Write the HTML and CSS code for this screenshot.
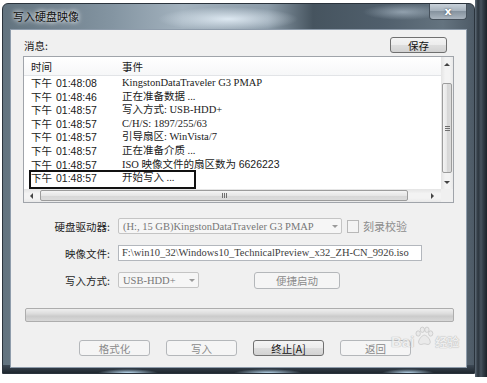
FILE: index.html
```html
<!DOCTYPE html>
<html lang="zh-CN">
<head>
    <meta charset="UTF-8">
    <title>写入硬盘映像</title>
    <link rel="stylesheet" href="styles.css">
</head>
<body>
    <div class="screen">
        <div class="window">
            <div class="titlebar">
                <span class="title">写入硬盘映像</span>
                <button class="close">x</button>
            </div>
            <div class="client">
                <div class="msg-head">
                    <span>消息:</span>
                    <button class="btn">保存</button>
                </div>

                <div class="listbox">
                    <div class="list-view">
                        <div class="list-header">
                            <span class="col-time">时间</span>
                            <span class="col-event">事件</span>
                        </div>
                        <div class="row"><span class="col-time">下午<span class="clock">01:48:08</span></span><span class="col-event">KingstonDataTraveler G3 PMAP</span></div>
                        <div class="row"><span class="col-time">下午<span class="clock">01:48:46</span></span><span class="col-event">正在准备数据 ...</span></div>
                        <div class="row"><span class="col-time">下午<span class="clock">01:48:57</span></span><span class="col-event">写入方式: USB-HDD+</span></div>
                        <div class="row"><span class="col-time">下午<span class="clock">01:48:57</span></span><span class="col-event">C/H/S: 1897/255/63</span></div>
                        <div class="row"><span class="col-time">下午<span class="clock">01:48:57</span></span><span class="col-event">引导扇区: WinVista/7</span></div>
                        <div class="row"><span class="col-time">下午<span class="clock">01:48:57</span></span><span class="col-event">正在准备介质 ...</span></div>
                        <div class="row"><span class="col-time">下午<span class="clock">01:48:57</span></span><span class="col-event">ISO 映像文件的扇区数为 <span class="num">6626223</span></span></div>
                        <div class="row"><span class="col-time">下午<span class="clock">01:48:57</span></span><span class="col-event">开始写入 ...</span></div>
                    </div>
                    <div class="vscroll">
                        <div class="sb-btn v-btn-up"><i class="arrow-up"></i></div>
                        <div class="sb-gap"></div>
                        <div class="thumb v-thumb"><i class="grip-h"></i></div>
                        <div class="sb-fill"></div>
                        <div class="sb-btn v-btn-down"><i class="arrow-down"></i></div>
                    </div>
                    <div class="hscroll">
                        <div class="sb-btn h-btn-left"><i class="arrow-left"></i></div>
                        <div class="thumb h-thumb"><i class="grip-v"></i></div>
                        <div class="sb-fill"></div>
                        <div class="sb-btn h-btn-right"><i class="arrow-right"></i></div>
                    </div>
                    <div class="corner"></div>
                    <div class="mark"></div>
                </div>

                <div class="form">
                    <div class="field">
                        <label>硬盘驱动器:</label>
                        <div class="combo drive">(H:, 15 GB)KingstonDataTraveler G3 PMAP<span class="drop"><i class="arrow-down light"></i></span></div>
                        <span class="checkbox"></span>
                        <span class="check-label">刻录校验</span>
                    </div>
                    <div class="field">
                        <label>映像文件:</label>
                        <div class="path">F:\win10_32\Windows10_TechnicalPreview_x32_ZH-CN_9926.iso</div>
                    </div>
                    <div class="field">
                        <label>写入方式:</label>
                        <div class="combo mode">USB-HDD+<span class="drop"><i class="arrow-down light"></i></span></div>
                        <button class="btn disabled quick">便捷启动</button>
                    </div>
                </div>

                <div class="progress"></div>

                <div class="actions">
                    <button class="btn disabled">格式化</button>
                    <button class="btn disabled">写入</button>
                    <button class="btn">终止[A]</button>
                    <button class="btn disabled">返回</button>
                </div>

                <div class="watermark">
                    <span class="wm-bai">Bai</span>
                    <svg class="paw" width="20" height="20" viewBox="0 0 24 24">
                        <ellipse cx="5" cy="9" rx="2.6" ry="3.2" />
                        <ellipse cx="10" cy="4.5" rx="2.6" ry="3.2" />
                        <ellipse cx="15.5" cy="4.5" rx="2.6" ry="3.2" />
                        <ellipse cx="20" cy="9" rx="2.6" ry="3.2" />
                        <path d="M12.5 11c-3 0-7 5-7 8.5 0 2.5 2.5 3 4 2.5 1.2-.4 2-.6 3-.6s1.8.2 3 .6c1.5.5 4 0 4-2.5 0-3.5-4-8.5-7-8.5z" />
                    </svg>
                    <span class="wm-jy">经验</span>
                </div>
            </div>
        </div>
        <div class="behind"></div>
    </div>
</body>
</html>
```

FILE: styles.css
```css
* {
    box-sizing: border-box;
}

body {
    margin: 0;
    background-color: #fff;
    font-family: "Noto Sans CJK SC", sans-serif;
    font-size: 10.5px;
    color: #1a1a1a;
}

.screen {
    display: flex;
    align-items: flex-start;
    width: 487px;
    height: 383px;
    overflow: hidden;
}

/* aero glass frame */
.window {
    display: flex;
    flex-direction: column;
    width: 473px;
    height: 371px;
    margin: 3px 0 0 2px;
    padding: 0 7px 5px 7px;
    border: 1px solid #2a333c;
    border-radius: 6px 6px 0 0;
    background:
        radial-gradient(ellipse 30px 4px at 125px 100%, rgba(200, 232, 255, 0.95), transparent),
        radial-gradient(ellipse 34px 4px at 265px 100%, rgba(200, 232, 255, 0.9), transparent),
        radial-gradient(ellipse 26px 4px at 405px 100%, rgba(200, 232, 255, 0.9), transparent),
        linear-gradient(to bottom, transparent 361px, #3d4955 361px, #1f272f),
        radial-gradient(ellipse 70px 12px at 225px 15px, rgba(225, 236, 245, 0.95), transparent),
        radial-gradient(ellipse 40px 8px at 400px 8px, rgba(170, 185, 198, 0.7), transparent),
        linear-gradient(90deg, #62737f 0, #8495a2 110px, #a3b2be 180px, #8b9ba8 265px, #46545f 310px, #505f6c 380px, #64737f 440px, #4c5965 473px);
}

.titlebar {
    display: flex;
    align-items: flex-start;
    height: 25px;
    flex-shrink: 0;
}

.title {
    margin: 4px 0 0 3px;
    font-size: 11px;
    color: #111;
    text-shadow: 0 0 4px #fff, 0 0 6px rgba(255, 255, 255, 0.8);
}

.close {
    margin-left: auto;
    width: 38px;
    height: 16px;
    padding: 0;
    border: 1px solid #46515c;
    border-top: none;
    border-radius: 0 0 4px 4px;
    background: linear-gradient(#c9d2da, #a3afba 50%, #86939f 50%, #aab5bf);
    color: #fff;
    font-family: "DejaVu Sans", sans-serif;
    font-size: 11px;
    font-weight: bold;
    line-height: 13px;
    text-shadow: 0 0 2px #3a4550;
}

.client {
    position: relative;
    display: flex;
    flex-direction: column;
    flex: 1;
    border: 1px solid #8e9cab;
    background-color: #f0f0f0;
}

.msg-head {
    display: flex;
    justify-content: space-between;
    align-items: center;
    height: 16px;
    margin: 7px 19px 0 13px;
}

/* buttons */
.btn {
    width: 71px;
    height: 16px;
    padding: 0;
    border: 1px solid #707070;
    border-radius: 3px;
    background: linear-gradient(#f4f4f4, #ececec 50%, #dedede 50%, #d2d2d2);
    font-family: "Noto Sans CJK SC", sans-serif;
    font-size: 10.5px;
    line-height: 13px;
    color: #111;
}

.msg-head .btn {
    width: 57px;
}

.btn.disabled {
    border-color: #b4b7ba;
    background: #f5f5f5;
    color: #8a8a8a;
}

/* message list */
.listbox {
    position: relative;
    display: grid;
    grid-template-columns: 1fr 12px;
    grid-template-rows: 1fr 13px;
    height: 147px;
    margin: 3px 12px 0 12px;
    border: 1px solid #a0a4aa;
    background-color: #fff;
}

.list-view {
    overflow: hidden;
}

.list-header {
    display: flex;
    align-items: center;
    height: 19px;
    border-bottom: 1px solid #e2e4e7;
    background: linear-gradient(#fff, #f6f7f8);
}

.row {
    display: flex;
    height: 13.6px;
    line-height: 13.6px;
    white-space: nowrap;
}

.col-time {
    width: 98px;
    padding-left: 7px;
    flex-shrink: 0;
}

.col-event {
    font-family: "Liberation Serif", "Noto Sans CJK SC", serif;
}

.list-header .col-event {
    font-family: "Noto Sans CJK SC", sans-serif;
}

.clock {
    margin-left: 4px;
    font-family: "Liberation Sans", sans-serif;
}

.num {
    font-family: "Liberation Sans", sans-serif;
}

.mark {
    position: absolute;
    left: 5px;
    top: 113px;
    width: 167px;
    height: 19px;
    border: 2px solid #111;
}

/* scrollbars */
.vscroll {
    display: flex;
    flex-direction: column;
    background: linear-gradient(90deg, #e4e4e4, #f3f3f3 35%, #f3f3f3 70%, #e9e9e9);
}

.hscroll {
    display: flex;
    background: linear-gradient(#e4e4e4, #f3f3f3 35%, #f3f3f3 70%, #e9e9e9);
}

.corner {
    background-color: #f0f0f0;
}

.sb-btn {
    display: flex;
    align-items: center;
    justify-content: center;
    flex-shrink: 0;
}

.v-btn-up {
    height: 15px;
}

.v-btn-down {
    height: 13px;
}

.h-btn-left {
    width: 15px;
}

.h-btn-right {
    width: 17px;
}

.sb-gap {
    height: 11px;
}

.sb-fill {
    flex: 1;
}

.thumb {
    display: flex;
    align-items: center;
    justify-content: center;
    border: 1px solid #9c9c9c;
    border-radius: 2px;
}

.v-thumb {
    height: 90px;
    margin: 0 1px;
    background: linear-gradient(90deg, #f4f4f4, #e6e6e6 50%, #d6d6d6 50%, #dcdcdc);
}

.h-thumb {
    width: 368px;
    margin: 1px 0 1px 1px;
    background: linear-gradient(#f4f4f4, #e6e6e6 50%, #d6d6d6 50%, #dcdcdc);
}

.grip-h {
    width: 5px;
    height: 5px;
    background: repeating-linear-gradient(#6f6f6f 0 1px, transparent 1px 2px);
}

.grip-v {
    width: 5px;
    height: 5px;
    background: repeating-linear-gradient(90deg, #6f6f6f 0 1px, transparent 1px 2px);
}

.arrow-up,
.arrow-down {
    width: 0;
    height: 0;
    border-left: 3px solid transparent;
    border-right: 3px solid transparent;
}

.arrow-up {
    border-bottom: 3px solid #444;
}

.arrow-down {
    border-top: 3px solid #444;
}

.arrow-down.light {
    border-top-color: #9a9a9a;
}

.arrow-left,
.arrow-right {
    width: 0;
    height: 0;
    border-top: 3px solid transparent;
    border-bottom: 3px solid transparent;
}

.arrow-left {
    border-right: 3px solid #444;
}

.arrow-right {
    border-left: 3px solid #444;
}

/* form */
.form {
    display: flex;
    flex-direction: column;
    gap: 11px;
    margin-top: 15px;
}

.field {
    display: flex;
    align-items: center;
    height: 16px;
}

.field label {
    width: 99px;
    margin-right: 8px;
    text-align: right;
    color: #1e1e1e;
}

.combo {
    display: flex;
    align-items: center;
    height: 16px;
    padding-left: 4px;
    border: 1px solid #c4c4c4;
    border-radius: 2px;
    background-color: #f6f6f6;
    font-family: "Liberation Serif", serif;
    color: #777;
    white-space: nowrap;
    overflow: hidden;
}

.combo.drive {
    width: 224px;
}

.combo.mode {
    width: 81px;
}

.drop {
    display: flex;
    align-items: center;
    justify-content: center;
    width: 13px;
    height: 14px;
    margin-left: auto;
}

.checkbox {
    width: 12px;
    height: 13px;
    margin-left: 5px;
    border: 1px solid #b8b8b8;
    background-color: #f4f4f4;
}

.check-label {
    margin-left: 4px;
    font-size: 11px;
    color: #8c8c8c;
}

.path {
    width: 304px;
    height: 16px;
    padding-left: 3px;
    border: 1px solid #b3b7bd;
    background-color: #fff;
    font-family: "Liberation Serif", serif;
    line-height: 14px;
    color: #3c3c3c;
    white-space: nowrap;
    overflow: hidden;
}

.btn.quick {
    width: 86px;
    height: 17px;
    margin-left: 55px;
}

.progress {
    height: 14px;
    margin: 20px 12px 0 14px;
    border: 1px solid #adadad;
    border-radius: 2px;
    background: linear-gradient(#efefef, #dcdcdc 40%, #cbcbcb 60%, #d8d8d8);
}

.actions {
    display: flex;
    gap: 16px;
    margin-top: 18px;
    padding-left: 68px;
}

/* baidu watermark */
.watermark {
    position: absolute;
    left: 380px;
    top: 296px;
    display: flex;
    align-items: flex-end;
    opacity: 0.75;
    pointer-events: none;
}

.wm-bai {
    font-family: "Liberation Sans", sans-serif;
    font-size: 15px;
    font-weight: bold;
    color: #eee;
    text-shadow: 0 0 1px #a8a8a8, 0 0 1px #a8a8a8;
    line-height: 18px;
}

.paw {
    margin: 0 1px 5px 0;
    fill: #e8e8e8;
    stroke: #b0b0b0;
    stroke-width: 0.8;
}

.wm-jy {
    font-size: 12px;
    font-weight: bold;
    color: #eee;
    text-shadow: 0 0 1px #a8a8a8, 0 0 1px #a8a8a8;
    line-height: 18px;
}

.behind {
    width: 12px;
    height: 377px;
    background: linear-gradient(90deg, #5f6c78 0, #2b343d 3px, #46525d 6px, #333e48 8px, #1b2229 12px);
}
```
